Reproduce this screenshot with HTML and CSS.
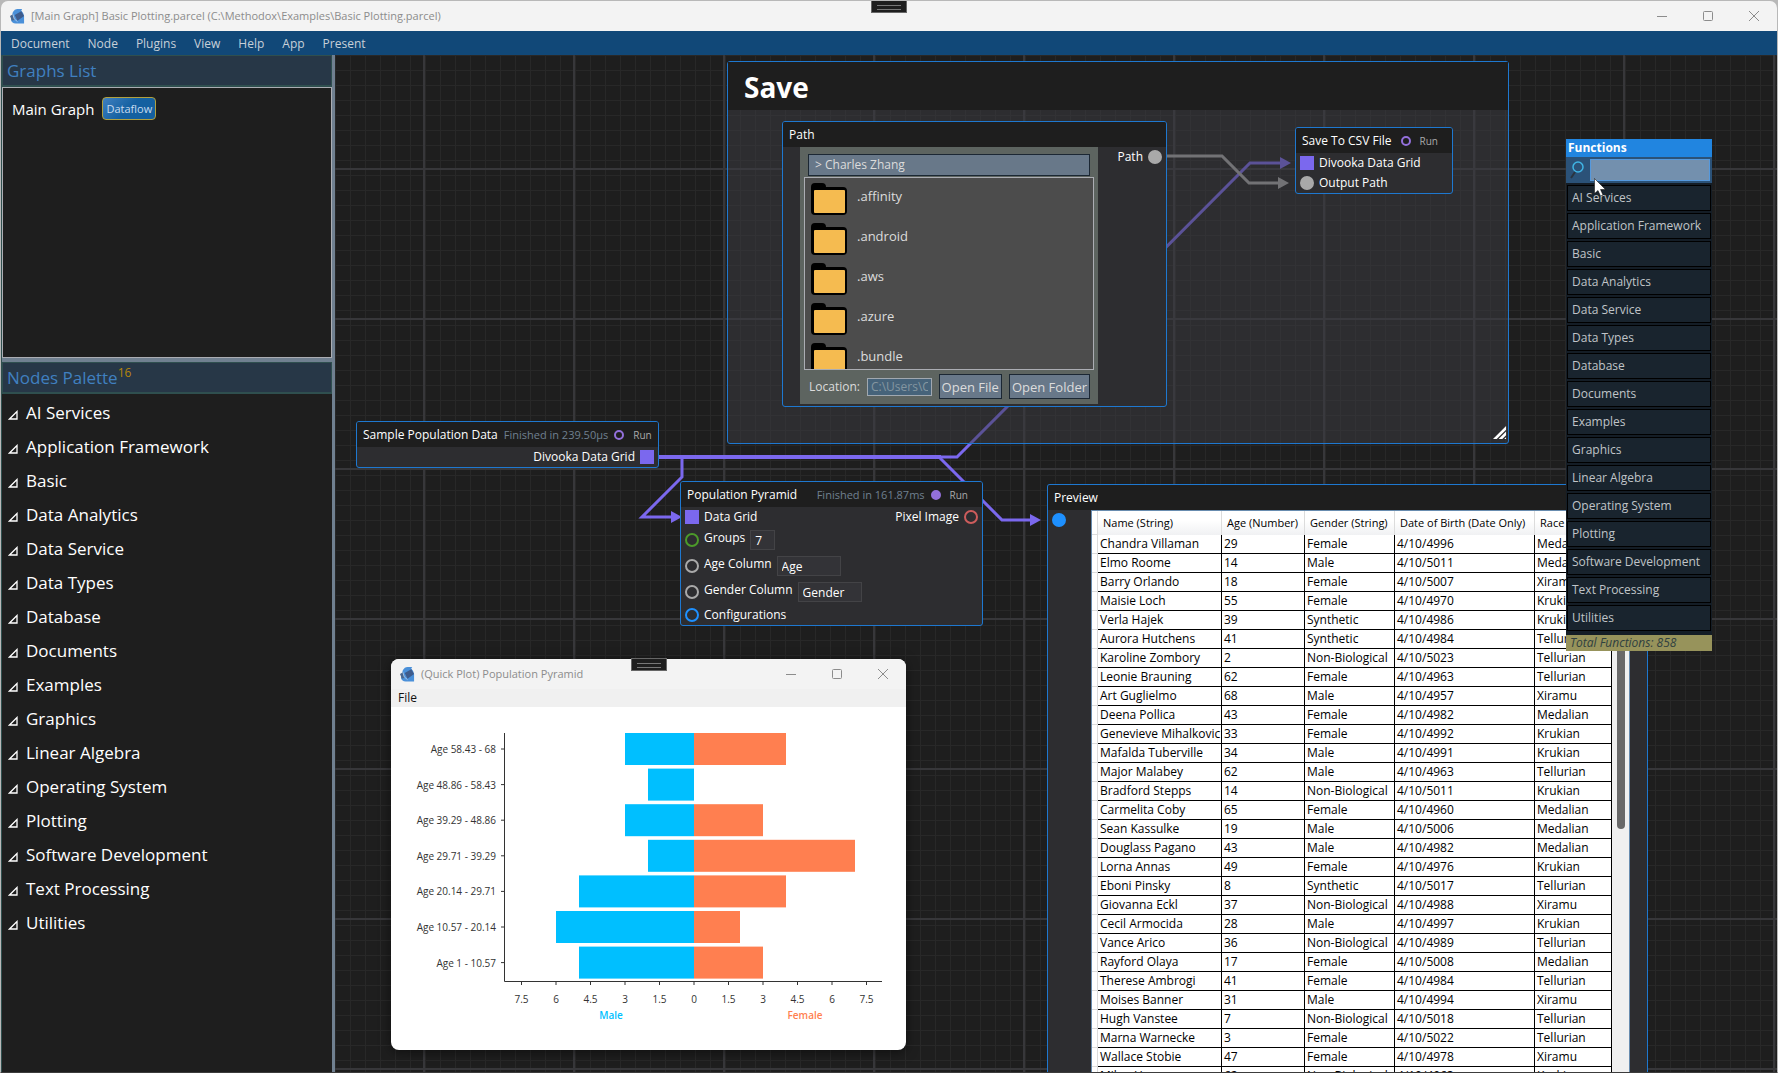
FILE: index.html
```html
<!DOCTYPE html>
<html lang="en">
<head>
  <meta charset="UTF-8" />
  <meta name="viewport" content="width=device-width, initial-scale=1.0"/>
  <title>[Main Graph] Basic Plotting.parcel</title>
  <link rel="stylesheet" href="styles.css">
</head>
<body>
  <svg class="defs" aria-hidden="true">
    <symbol id="app-logo" viewBox="0 0 16 16">
      <path d="M3 4 Q5 0 9 0.500 L13 0.500 L12 2 Q15 5 15 8 V16 H6 Q2 16 1 12 Z" fill="#4a90d9"/>
      <path d="M0 8 L3 6 L5 12 L2 13 Z" fill="#4a6890"/>
      <path d="M5 7 L12 3 L15 8 L8 13 Z" fill="#3f5c8c"/>
      <path d="M3 6 L4.500 11 L8 14" fill="none" stroke="#c4d8f0" stroke-width="0.800"/>
    </symbol>
    <symbol id="folder" viewBox="0 0 36 32">
      <path d="M0 4 Q0 0 4 0 H11 Q15 0 15 4 H32 Q36 4 36 8 V28 Q36 32 32 32 H4 Q0 32 0 28 Z" fill="#000"/>
      <rect x="3" y="7" width="31" height="23" rx="1" fill="#f5bb50"/>
    </symbol>
    <symbol id="win-min" viewBox="0 0 10 10"><path d="M0 5.500 H10" stroke="currentColor"/></symbol>
    <symbol id="win-max" viewBox="0 0 10 10"><rect x="0.500" y="0.500" width="9" height="9" rx="1" fill="none" stroke="currentColor"/></symbol>
    <symbol id="win-close" viewBox="0 0 10 10"><path d="M0 0 L10 10 M10 0 L0 10" stroke="currentColor"/></symbol>
  </svg>

  <div class="window">
    <header class="titlebar">
      <svg class="logo"><use href="#app-logo"/></svg>
      <h1 class="title">[Main Graph] Basic Plotting.parcel (C:\Methodox\Examples\Basic Plotting.parcel)</h1>
      <div class="win-buttons">
        <button aria-label="Minimize"><svg><use href="#win-min"/></svg></button>
        <button aria-label="Maximize"><svg><use href="#win-max"/></svg></button>
        <button aria-label="Close"><svg><use href="#win-close"/></svg></button>
      </div>
      <span class="grabber"></span>
    </header>

    <nav class="menubar">
      <button>Document</button>
      <button>Node</button>
      <button>Plugins</button>
      <button>View</button>
      <button>Help</button>
      <button>App</button>
      <button>Present</button>
    </nav>

    <main class="workspace">
      <aside class="sidebar">
        <h2 class="panel-title">Graphs List</h2>
        <ul class="graph-list">
          <li>Main Graph <span class="tag">Dataflow</span></li>
        </ul>
        <div class="splitter"></div>
        <h2 class="panel-title">Nodes Palette<sup>16</sup></h2>
        <ul class="tree" id="tree"></ul>
      </aside>

      <section class="canvas">
        <svg class="wires">
          <g class="wire data">
            <path d="M323 402 H622 L915 108 H947"/>
            <path d="M347 402 V422 L307 462 H337"/>
            <path d="M604 402 L667 465 H697"/>
            <path class="trunk" d="M323 402 H606"/>
            <path class="head" d="M945 102 L956 108 L945 114 Z"/>
            <path class="head" d="M336 456 L347 462 L336 468 Z"/>
            <path class="head" d="M695 459 L706 465 L695 471 Z"/>
          </g>
          <g class="wire value">
            <path d="M831 101 H887 L914 128 H944"/>
            <path class="head" d="M943 122 L954 128 L943 134 Z"/>
          </g>
        </svg>

        <div class="frame">
          <h2>Save</h2>
          <svg class="resize" viewBox="0 0 15 15"><path d="M0 14 L14 0 V4 L4 14 Z M6 14 L14 6 V10 L10 14 Z M12 14 L14 12 V14 Z" fill="#fff"/></svg>
        </div>

        <article class="node path-node">
          <header><h3>Path</h3></header>
          <div class="path-body">
            <div class="browser">
              <button class="crumb">&gt; Charles Zhang</button>
              <ul class="folders">
                <li><svg><use href="#folder"/></svg>.affinity</li>
                <li><svg><use href="#folder"/></svg>.android</li>
                <li><svg><use href="#folder"/></svg>.aws</li>
                <li><svg><use href="#folder"/></svg>.azure</li>
                <li><svg><use href="#folder"/></svg>.bundle</li>
              </ul>
              <div class="location">
                <label for="location">Location:</label>
                <input id="location" type="text" value="C:\Users\Charles Zhang" disabled>
                <button>Open File</button>
                <button>Open Folder</button>
              </div>
            </div>
            <div class="port">Path <i class="pin full gray"></i></div>
          </div>
        </article>

        <article class="node csv-node">
          <header><h3>Save To CSV File</h3><i class="dot"></i><button class="run">Run</button></header>
          <div class="port"><i class="pin square"></i> Divooka Data Grid</div>
          <div class="port"><i class="pin full gray"></i> Output Path</div>
        </article>

        <article class="node sample-node">
          <header><h3>Sample Population Data</h3><span class="status">Finished in 239.50µs</span><i class="dot"></i><button class="run">Run</button></header>
          <div class="port out">Divooka Data Grid <i class="pin square"></i></div>
        </article>

        <article class="node pyramid-node">
          <header><h3>Population Pyramid</h3><span class="status">Finished in 161.87ms</span><i class="dot done"></i><button class="run">Run</button></header>
          <div class="port"><i class="pin square"></i> Data Grid <span class="port out">Pixel Image <i class="pin red"></i></span></div>
          <div class="port field"><i class="pin green"></i><label for="groups">Groups</label><input id="groups" class="short" type="text" value="7"></div>
          <div class="port field"><i class="pin gray"></i><label for="age">Age Column</label><input id="age" type="text" value="Age"></div>
          <div class="port field"><i class="pin gray"></i><label for="gender">Gender Column</label><input id="gender" type="text" value="Gender"></div>
          <div class="port"><i class="pin blue"></i> Configurations</div>
        </article>

        <article class="node preview-node">
          <header><h3>Preview</h3></header>
          <div class="preview-body">
            <div class="port"><i class="pin full blue"></i></div>
            <div class="grid-view">
              <table>
                <colgroup><col class="c-row"><col class="c-name"><col class="c-age"><col class="c-gender"><col class="c-birth"><col class="c-race"></colgroup>
                <thead>
                  <tr><td></td><th>Name (String)</th><th>Age (Number)</th><th>Gender (String)</th><th>Date of Birth (Date Only)</th><th>Race (String)</th></tr>
                </thead>
                <tbody id="rows"></tbody>
              </table>
              <div class="scroll"><span class="thumb"></span></div>
            </div>
          </div>
        </article>

        <div class="plot-window">
          <header class="titlebar">
            <svg class="logo"><use href="#app-logo"/></svg>
            <h3 class="title">(Quick Plot) Population Pyramid</h3>
            <div class="win-buttons">
              <button aria-label="Minimize"><svg><use href="#win-min"/></svg></button>
              <button aria-label="Maximize"><svg><use href="#win-max"/></svg></button>
              <button aria-label="Close"><svg><use href="#win-close"/></svg></button>
            </div>
            <span class="grabber"></span>
          </header>
          <div class="plot-menu"><button>File</button></div>
          <svg class="chart" id="chart" viewBox="0 0 515 343"></svg>
        </div>

        <div class="popup">
          <h3>Functions</h3>
          <div class="search">
            <svg viewBox="0 0 14 18"><circle cx="8" cy="6" r="5" fill="none" stroke="#3fb4e4" stroke-width="1.500"/><path d="M5 11 L1 17" stroke="#2a3540" stroke-width="2"/></svg>
            <input type="text" aria-label="Search functions">
          </div>
          <ul id="functions"></ul>
          <p class="total">Total Functions: 858</p>
        </div>

        <svg class="cursor" viewBox="0 0 12 19"><path d="M0.500 0.500 V15.500 L4 12.500 L6.500 18 L9 17 L6.500 11.500 H11.500 Z" fill="#fff" stroke="#000" stroke-width="0.500"/></svg>
      </section>
    </main>
  </div>

  <script>
    const categories = [
      "AI Services", "Application Framework", "Basic", "Data Analytics",
      "Data Service", "Data Types", "Database", "Documents", "Examples",
      "Graphics", "Linear Algebra", "Operating System", "Plotting",
      "Software Development", "Text Processing", "Utilities"
    ];

    const people = [
      ["Chandra Villaman", 29, "Female", "4/10/4996", "Medalian"],
      ["Elmo Roome", 14, "Male", "4/10/5011", "Medalian"],
      ["Barry Orlando", 18, "Female", "4/10/5007", "Xiramu"],
      ["Maisie Loch", 55, "Female", "4/10/4970", "Krukian"],
      ["Verla Hajek", 39, "Synthetic", "4/10/4986", "Krukian"],
      ["Aurora Hutchens", 41, "Synthetic", "4/10/4984", "Tellurian"],
      ["Karoline Zombory", 2, "Non-Biological", "4/10/5023", "Tellurian"],
      ["Leonie Brauning", 62, "Female", "4/10/4963", "Tellurian"],
      ["Art Guglielmo", 68, "Male", "4/10/4957", "Xiramu"],
      ["Deena Pollica", 43, "Female", "4/10/4982", "Medalian"],
      ["Genevieve Mihalkovic", 33, "Female", "4/10/4992", "Krukian"],
      ["Mafalda Tuberville", 34, "Male", "4/10/4991", "Krukian"],
      ["Major Malabey", 62, "Male", "4/10/4963", "Tellurian"],
      ["Bradford Stepps", 14, "Non-Biological", "4/10/5011", "Krukian"],
      ["Carmelita Coby", 65, "Female", "4/10/4960", "Medalian"],
      ["Sean Kassulke", 19, "Male", "4/10/5006", "Medalian"],
      ["Douglass Pagano", 43, "Male", "4/10/4982", "Medalian"],
      ["Lorna Annas", 49, "Female", "4/10/4976", "Krukian"],
      ["Eboni Pinsky", 8, "Synthetic", "4/10/5017", "Tellurian"],
      ["Giovanna Eckl", 37, "Non-Biological", "4/10/4988", "Xiramu"],
      ["Cecil Armocida", 28, "Male", "4/10/4997", "Krukian"],
      ["Vance Arico", 36, "Non-Biological", "4/10/4989", "Tellurian"],
      ["Rayford Olaya", 17, "Female", "4/10/5008", "Medalian"],
      ["Therese Ambrogi", 41, "Female", "4/10/4984", "Tellurian"],
      ["Moises Banner", 31, "Male", "4/10/4994", "Xiramu"],
      ["Hugh Vanstee", 7, "Non-Biological", "4/10/5018", "Tellurian"],
      ["Marna Warnecke", 3, "Female", "4/10/5022", "Tellurian"],
      ["Wallace Stobie", 47, "Female", "4/10/4978", "Xiramu"],
      ["Milan Haag", 62, "Non-Biological", "4/10/4963", "Krukian"]
    ];

    // [label, male, female], top to bottom
    const pyramid = [
      ["Age 58.43 - 68", 3, 4],
      ["Age 48.86 - 58.43", 2, 0],
      ["Age 39.29 - 48.86", 3, 3],
      ["Age 29.71 - 39.29", 2, 7],
      ["Age 20.14 - 29.71", 5, 4],
      ["Age 10.57 - 20.14", 6, 2],
      ["Age 1 - 10.57", 5, 3]
    ];

    document.getElementById("tree").innerHTML = categories.map(name =>
      `<li><svg viewBox="0 0 10 10"><path d="M1.5 9 H9 V1.5 Z" fill="none" stroke="#fff" stroke-width="1.3"/></svg>${name}</li>`
    ).join("");

    document.getElementById("functions").innerHTML = categories.map(name =>
      `<li><button>${name}</button></li>`
    ).join("");

    document.getElementById("rows").innerHTML = people.map(row =>
      `<tr><td></td>${row.map(cell => `<td>${cell}</td>`).join("")}</tr>`
    ).join("");

    function drawChart() {
      const zero = 303, unit = 23, top = 26, step = 35.6, bottom = 274;
      let out = "";
      pyramid.forEach(([label, male, female], i) => {
        const y = top + i * step;
        out += `<rect x="${zero - male * unit}" y="${y}" width="${male * unit}" height="32" fill="#00bfff"/>`;
        out += `<rect x="${zero}" y="${y}" width="${female * unit}" height="32" fill="#ff7f50"/>`;
        out += `<path class="axis" d="M110 ${y + 16} H114"/>`;
        out += `<text x="105" y="${y + 20}" text-anchor="end">${label}</text>`;
      });
      out += `<path class="axis" d="M113.5 ${top} V${bottom + 0.5} H491"/>`;
      for (let v = -7.5; v <= 7.5; v += 1.5) {
        const x = zero + v * unit;
        out += `<path class="axis" d="M${x} ${bottom} V${bottom + 4}"/>`;
        out += `<text x="${x}" y="296" text-anchor="middle">${Math.abs(v)}</text>`;
      }
      out += `<text class="male" x="220" y="312" text-anchor="middle">Male</text>`;
      out += `<text class="female" x="414" y="312" text-anchor="middle">Female</text>`;
      document.getElementById("chart").innerHTML = out;
    }

    drawChart();
  </script>
</body>
</html>
```
FILE: styles.css
```css
* {
  box-sizing: border-box;
}

body {
  margin: 0;
  background: #b8b8b8;
  font-family: "Open Sans", "Noto Sans", sans-serif;
  font-size: 12px;
  line-height: 16px;
  color: #fff;
}

h1, h2, h3, ul, p {
  margin: 0;
  padding: 0;
  font-size: inherit;
  font-weight: normal;
}

ul {
  list-style: none;
}

button, input {
  font: inherit;
  color: inherit;
  border: none;
  background: none;
  padding: 0;
  margin: 0;
}

.defs {
  position: absolute;
  width: 0;
  height: 0;
}

.window {
  height: 100vh;
  display: flex;
  flex-direction: column;
  border: 1px solid #b8b8b8;
  border-bottom-color: #3c3c3c;
  border-radius: 8px 8px 0 0;
  overflow: hidden;
}

.titlebar {
  position: relative;
  height: 30px;
  flex: none;
  display: flex;
  align-items: center;
  gap: 6px;
  padding: 0 18px 0 9px;
  background: #f3f3f3;
  color: #8c8c8c;
}

.titlebar .title {
  flex: 1;
  font-size: 11px;
  white-space: nowrap;
}

.logo {
  width: 15px;
  height: 16px;
}

.win-buttons {
  display: flex;
  gap: 36px;
}

.win-buttons button {
  display: flex;
}

.win-buttons svg {
  width: 10px;
  height: 10px;
}

.grabber {
  position: absolute;
  top: -1px;
  left: 50%;
  width: 36px;
  height: 13px;
  margin-left: -18px;
  border: 1px solid #666;
  background: #1e1e1e;
}

.grabber::after {
  content: "";
  display: block;
  margin: 4px 5px;
  height: 3px;
  border: 1px solid #777;
  border-width: 1px 0;
}

.menubar {
  height: 24px;
  flex: none;
  display: flex;
  align-items: center;
  gap: 18px;
  padding: 2px 10px 0;
  background: #114878;
  color: #c8d0d8;
}

.workspace {
  flex: 1;
  min-height: 0;
  display: flex;
}

/* Sidebar */

.sidebar {
  width: 334px;
  flex: none;
  display: flex;
  flex-direction: column;
  background: #1e1e1e;
  border-left: 1px solid #2f4f4f;
  border-right: 3px solid #708090;
}

.panel-title {
  flex: none;
  height: 32px;
  padding: 0 4px;
  border: 1px solid #2f4f4f;
  border-bottom-width: 2px;
  background: #273747;
  color: #4080c0;
  font-size: 17px;
  line-height: 30px;
}

.panel-title sup {
  color: #b8860b;
  font-size: 12px;
  line-height: 12px;
}

.graph-list {
  flex: none;
  height: 271px;
  padding: 9px;
  border: 1px solid #abadb3;
}

.graph-list li {
  display: flex;
  align-items: center;
  gap: 8px;
  font-size: 15px;
}

.tag {
  padding: 2px 3px;
  border: 1px solid #b0a040;
  border-radius: 4px;
  background: linear-gradient(135deg, #4080c0, #1460a0 50%);
  color: #c8dcf0;
  font-size: 11px;
  line-height: 17px;
}

.splitter {
  flex: none;
  height: 4px;
  background: #708090;
}

.tree {
  padding-top: 2px;
}

.tree li {
  display: flex;
  align-items: center;
  gap: 8px;
  height: 34px;
  padding-left: 6px;
  font-size: 17px;
}

.tree svg {
  width: 10px;
  height: 10px;
  margin-top: 4px;
}

/* Canvas */

.canvas {
  position: relative;
  flex: 1;
  min-width: 0;
  overflow: hidden;
  background-color: #1e1e1e;
  background-image:
    linear-gradient(#37373a 2px, transparent 2px),
    linear-gradient(90deg, #37373a 2px, transparent 2px),
    linear-gradient(#282828 1px, transparent 1px),
    linear-gradient(90deg, #282828 1px, transparent 1px);
  background-size: 150px 150px, 150px 150px, 15px 15px, 15px 15px;
  background-position: 88px 113px, 88px 113px, 0 0, 0 0;
}

.wires {
  position: absolute;
  inset: 0;
  width: 100%;
  height: 100%;
}

.wire {
  fill: none;
  stroke-width: 3;
}

.wire.data {
  stroke: #7b68ee;
}

.wire.value {
  stroke: #a9a9a9;
}

.wire .trunk {
  stroke-width: 4;
}

.wire .head {
  stroke: none;
}

.data .head {
  fill: #7b68ee;
}

.value .head {
  fill: #a9a9a9;
}

.frame {
  position: absolute;
  left: 392px;
  top: 6px;
  width: 782px;
  height: 383px;
  border: 1px solid #1e78d0;
  border-radius: 3px;
  background: rgba(60, 60, 66, 0.5);
}

.frame h2 {
  height: 48px;
  padding: 0 16px;
  background: #1e1e1e;
  font-size: 28px;
  font-weight: bold;
  line-height: 50px;
}

.resize {
  position: absolute;
  right: 1px;
  bottom: 3px;
  width: 14px;
  height: 14px;
}

.node {
  position: absolute;
  border: 1px solid #1e78d0;
  border-radius: 3px;
  background: #2d2d30;
  overflow: hidden;
}

.node header {
  height: 25px;
  display: flex;
  align-items: center;
  gap: 6px;
  padding: 0 14px 0 6px;
  background: #1e1e1e;
}

.node h3 {
  white-space: nowrap;
}

.status {
  margin-left: auto;
  color: #708090;
  font-size: 11px;
  white-space: nowrap;
}

.dot {
  width: 10px;
  height: 10px;
  flex: none;
  border: 2px solid #9370db;
  border-radius: 50%;
}

.dot.done {
  background: #9370db;
}

.run {
  padding-left: 3px;
  color: #a9a9a9;
  font-size: 10px;
}

.port {
  display: flex;
  align-items: center;
  gap: 5px;
  height: 20px;
  padding: 0 4px;
  white-space: nowrap;
}

.port.out {
  margin-left: auto;
  justify-content: flex-end;
}

.port .port {
  padding: 0;
}

.port.field {
  height: 26px;
}

.field label {
  padding-bottom: 4px;
}

.field input {
  width: 64px;
  height: 20px;
  padding: 0 4px;
  border: 1px solid #434346;
  background: #333337;
}

.field .short {
  width: 25px;
}

.pin {
  width: 14px;
  height: 14px;
  flex: none;
  border: 2px solid;
  border-radius: 50%;
}

.pin.square {
  border-radius: 0;
  background: #7b68ee;
  border-color: #7b68ee;
}

.pin.gray {
  border-color: #a9a9a9;
}

.pin.green {
  border-color: #4c9a2a;
}

.pin.red {
  border-color: #cd5c5c;
}

.pin.blue {
  border-color: #1e90ff;
}

.pin.full.gray {
  background: #a9a9a9;
}

.pin.full.blue {
  background: #1e90ff;
}

.path-node {
  left: 447px;
  top: 66px;
  width: 385px;
}

.path-body {
  display: flex;
  justify-content: space-between;
  padding: 0 0 2px 17px;
}

.path-body .port {
  padding-right: 4px;
}

.browser {
  width: 298px;
  padding: 7px 4px 5px;
  background: #5d6460;
  color: #dcdcdc;
}

.crumb {
  display: block;
  width: 282px;
  height: 22px;
  margin: 0 4px 1px;
  padding: 0 6px;
  border: 1px solid #1b2733;
  background: #687889;
  text-align: left;
}

.folders {
  height: 193px;
  border: 1px solid #abadb3;
  background: #4c4c4c;
  overflow: hidden;
  font-size: 13px;
}

.folders li {
  display: flex;
  gap: 10px;
  height: 40px;
  padding: 5px 6px 0;
  line-height: 26px;
}

.folders svg {
  width: 36px;
  height: 32px;
}

.location {
  display: flex;
  align-items: center;
  gap: 7px;
  padding: 4px 4px 0 5px;
}

.location input {
  height: 18px;
  min-width: 0;
  flex: 1;
  padding: 0 3px;
  border: 1px solid #a0a8b0;
  background: #46637a;
  color: #8496a0;
}

.location button {
  height: 25px;
  padding: 0 2px;
  border: 1px solid #1b2733;
  background: #687889;
  font-size: 13px;
}

.csv-node {
  left: 960px;
  top: 72px;
  width: 158px;
}

.csv-node h3 {
  flex: 1;
}

.sample-node {
  left: 21px;
  top: 366px;
  width: 303px;
}

.pyramid-node {
  left: 345px;
  top: 426px;
  width: 303px;
}

.preview-node {
  left: 712px;
  top: 429px;
  width: 601px;
  bottom: 0;
  border-bottom: none;
  border-radius: 3px 3px 0 0;
  display: flex;
  flex-direction: column;
}

.preview-node header {
  flex: none;
}

.preview-body {
  flex: 1;
  min-height: 0;
  display: flex;
  padding-right: 17px;
}

.preview-body .port {
  width: 43px;
}

.grid-view {
  flex: 1;
  display: flex;
  overflow: hidden;
  border: 1px solid #688caf;
  border-bottom: none;
  background: #fff;
  color: #000;
}

.grid-view table {
  width: 520px;
  flex: none;
  align-self: flex-start;
  table-layout: fixed;
  border-collapse: separate;
  border-spacing: 0;
}

.c-row { width: 6px; }
.c-name { width: 124px; }
.c-age { width: 83px; }
.c-gender { width: 90px; }
.c-birth { width: 140px; }
.c-race { width: 77px; }

.grid-view th {
  height: 24px;
  padding: 0 5px;
  border-right: 1px solid #dcdcdc;
  background: linear-gradient(#fff 40%, #f0f1f3);
  font-size: 11px;
  font-weight: normal;
  text-align: left;
  white-space: nowrap;
  overflow: hidden;
}

.grid-view td {
  height: 19px;
  padding: 0 0 0 2px;
  line-height: 16px;
  border-right: 1px solid #000;
  border-bottom: 1px solid #000;
  white-space: nowrap;
}

.grid-view td:first-child {
  border-color: #dcdcdc;
}

.scroll {
  flex: 1;
  background: #f0f0f0;
}

.thumb {
  display: block;
  width: 8px;
  height: 318px;
  margin: 0 auto;
  border-radius: 4px;
  background: #696969;
}

/* Quick plot window */

.plot-window {
  position: absolute;
  left: 56px;
  top: 604px;
  width: 515px;
  border-radius: 8px;
  background: #fff;
  color: #111;
  box-shadow: 0 2px 12px rgba(0, 0, 0, 0.5);
}

.plot-window .titlebar {
  border-radius: 8px 8px 0 0;
}

.plot-menu {
  height: 18px;
  padding: 1px 7px;
  background: #f0f0f0;
  line-height: 16px;
}

.chart {
  display: block;
  width: 100%;
  font-size: 10px;
}

.chart text {
  fill: #333;
}

.chart .male {
  fill: #00bfff;
  font-weight: 600;
}

.chart .female {
  fill: #ff7f50;
  font-weight: 600;
}

.axis {
  fill: none;
  stroke: #333;
}

/* Functions popup */

.popup {
  position: absolute;
  left: 1231px;
  top: 84px;
  width: 146px;
  background: #141d26;
}

.popup h3 {
  height: 18px;
  padding: 0 2px;
  background: #2185e0;
  font-weight: bold;
  line-height: 18px;
}

.search {
  display: flex;
  align-items: center;
  gap: 6px;
  height: 26px;
  padding: 0 2px 0 4px;
  background: #2b5278;
}

.search svg {
  width: 14px;
  height: 18px;
}

.search input {
  flex: 1;
  min-width: 0;
  height: 22px;
  border: 1px solid #5599dd;
  background: #7390ae;
}

.popup ul {
  display: flex;
  flex-direction: column;
  gap: 2px;
  padding: 2px 1px 4px;
}

.popup li button {
  display: block;
  width: 100%;
  height: 26px;
  padding: 0 4px;
  border: 1px solid #000;
  background: #19242e;
  color: #c0c4c8;
  text-align: left;
  white-space: nowrap;
}

.total {
  height: 16px;
  padding: 0 4px;
  background: #97935b;
  color: #2f4040;
  font-style: italic;
}

.cursor {
  position: absolute;
  left: 1259px;
  top: 123px;
  width: 12px;
  height: 19px;
}
```
